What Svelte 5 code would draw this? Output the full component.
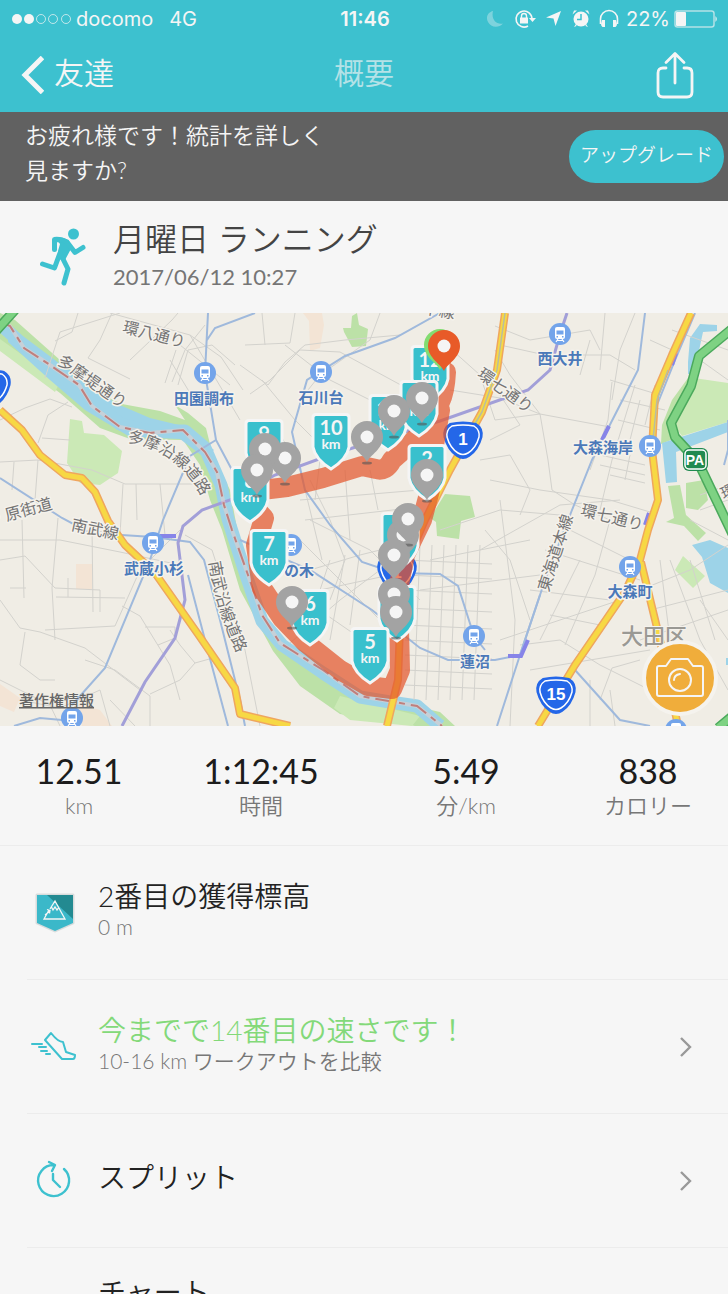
<script>
  const stats = [
    { value: '12.51', label: 'km' },
    { value: '1:12:45', label: '時間' },
    { value: '5:49', label: '分/km' },
    { value: '838', label: 'カロリー' }
  ];

  // x, y are in the map's own units; y starts at 313
  const stations = [
    [205, 373], [321, 372], [560, 334], [650, 446], [153, 543],
    [630, 567], [474, 636], [72, 718], [676, 730], [291, 545]
  ];

  const stationNames = [
    [204, 404, '田園調布'], [321, 403, '石川台'], [560, 364, '西大井'],
    [603, 453, '大森海岸'], [154, 574, '武蔵小杉'], [630, 597, '大森町'],
    [475, 667, '蓮沼'], [299, 576, 'の木']
  ];

  const roadNames = [
    [154, 335, 14, '環八通り'], [92, 382, 35, '多摩堤通り'], [505, 391, 36, '環七通り'],
    [612, 518, 14, '環七通り'], [21, 512, -15, '・原街道'], [95, 530, 12, '南武線'],
    [556, 553, -72, '東海道本線'], [439, 311, 10, '千線'], [729, 492, -25, '環']
  ];

  // kilometre markers: centre, top edge, distance
  const shields = [
    [430, 345, '12'], [388, 394, '11'], [419, 380, '1'], [331, 413, '10'],
    [264, 419, '9'], [250, 466, '8'], [427, 444, '2'], [400, 512, '3'],
    [397, 585, '4'], [370, 627, '5'], [310, 589, '6'], [269, 529, '7']
  ];

  const pins = [
    [367, 437], [394, 411], [422, 398], [285, 458], [265, 449], [257, 470],
    [427, 475], [403, 535], [408, 519], [394, 555], [394, 594], [396, 612], [292, 602]
  ];

  const routeShields = [[463, 440, '1'], [556, 695, '15'], [397, 573, '1'], [-9, 388, '']];

  const minorRoads = [
    'M55 341 L72 332 L78 313', 'M45 378 L60 332 L120 313', 'M88 358 L100 340 L112 313', 'M88 358 L130 379',
    'M110 313 L190 335 L221 357 L243 390', 'M130 360 L150 341 L172 320 L178 313', 'M172 382 L185 350 L205 325',
    'M165 383 L176 350 M178 385 L188 350 L212 345 L235 365 M170 360 L190 393 L220 402 M180 345 L230 385 M190 335 L240 420',
    'M0 420 L25 408 L50 399 L72 407', 'M38 443 L48 415 L68 402 M42 438 L70 440', 'M0 462 L38 460 L92 470 M14 462 L12 490',
    'M92 470 L125 484 L207 484 M123 484 L120 535 L92 530 M136 484 L137 520 M160 484 L165 535 M38 460 L35 500',
    'M0 540 L60 540 L120 552 L180 565 M58 518 L52 588 L55 640 M0 560 L25 556 L55 588 L100 590 M22 520 L24 598 M10 588 L26 588',
    'M0 600 L20 628 L40 632 L85 648 L140 690 M25 632 L20 665 L40 680 L55 680 M45 630 L115 626 L140 570 L180 530',
    'M92 524 L93 612 M100 590 L100 612 M68 578 L68 597 M56 597 L125 598 M122 606 L140 616 L170 665 L180 700 M85 660 L115 670 L150 696 L150 726',
    'M145 627 L175 627 L175 638 L158 645 M195 663 L180 680 L150 694 M195 663 L213 658 M195 663 L180 645 L170 630 M20 700 L60 708 L100 690 L110 726',
    'M0 680 L50 705 L60 726 M110 700 L135 726', 'M185 535 L212 550 L228 600 L245 650 L260 726',
    'M245 345 L290 343 L295 313 M262 313 L265 345 M240 365 L268 385 L285 362 L305 345 L345 340 L400 335',
    'M250 394 L270 380 L300 350 L340 352 L410 390 M285 345 L330 380 L370 400 M262 380 L295 420 L330 455 M300 400 L320 375 L370 340 L380 313',
    'M272 420 L300 470 L310 510 L322 560 M310 480 L330 520 L345 560 L330 600 M300 500 L420 490 M305 520 L410 508 M320 460 L315 500 M345 470 L350 540 M370 470 L378 510',
    'M300 540 L400 640 M310 570 L360 555 L400 545 M320 590 L390 575 M305 600 L370 645 M330 560 L310 620 M345 555 L330 640 M360 550 L350 625',
    'M290 643 L340 600 L380 570 M310 520 L370 550 L420 600 M440 530 L500 510 L560 515 M430 560 L530 540 M420 590 L540 575 M500 500 L515 620 L510 726',
    'M452 350 L480 375 L495 420 L540 414 L610 427 M450 390 L500 398 L540 414 M495 350 L510 375 L540 414 M540 414 L548 460 L552 490 L575 505 L610 520',
    'M495 326 L530 340 L590 330 L600 350 M500 345 L545 355 L610 355 L635 370 M590 340 L580 375 M605 313 L600 370 M635 313 L620 350 L612 400 M610 380 L660 395',
    'M490 440 L520 425 L500 395 M480 460 L510 455 L530 490 L520 515 M490 480 L540 490 L610 500 L650 512 M612 382 L608 420 L590 470',
    'M480 550 L560 505 L620 500 M485 530 L510 560 L530 620 M545 550 L640 580 M560 525 L630 560 M530 590 L610 600 M540 640 L580 560 M565 645 L595 575 L610 520',
    'M520 645 L560 640 L600 665 L650 690 M500 640 L620 600 M550 615 L600 625 M530 670 L620 655 L650 650 M600 700 L612 668 L640 660 M590 680 L590 726 M610 690 L615 726',
    'M640 590 L690 570 L728 545 M650 610 L728 590 M670 560 L700 640 L728 690 M690 560 L715 640 M660 560 L670 640 M640 640 L728 610 M700 600 L728 640',
    'M635 385 L612 460 L600 510 M620 400 L665 410 M618 420 L660 430 M600 455 L645 465 M600 465 L645 475 M610 475 L645 483 M630 455 L625 480 M640 400 L630 440 M655 385 L645 425',
    'M672 330 L728 350 M700 360 L728 380 M700 495 L728 485 M700 510 L728 500 M690 520 L728 540 M650 340 L672 350'
  ];

  const gridRoads = [420, 432, 444, 456, 468, 480];
  const gridRows = [560, 575, 590, 608, 625, 640, 655, 670, 685];

  const highways = [
    'M0 410 L22 430 L40 455 L65 475 L82 478 L95 492 L108 521 L125 545 L155 573 L200 637 L235 688 L240 714 L290 726',
    'M505 313 L497 370 L482 412 L450 470 L425 520 L402 573 L398 680 L387 726',
    'M691 313 L672 355 L655 395 L652 450 L658 500 L648 530 L640 560 L625 592 L575 665 L538 726 M641 562 L660 640 L678 726'
  ];
  const expressway = 'M-5 332 L15 310 M733 328 L699 356 L691 386 L671 423 L675 437 L698 462 L733 535 M740 710 L718 728';
  const border = 'M0 322 L10 326 L24 348 L50 365 L79 385 L92 406 L120 427 L150 433 L183 430 L205 452 L217 472 L224 505 L232 530 L248 575 L262 615 L280 643 L323 670 L360 696 L417 706 L442 726';
</script>

<div class="app">
  <header class="top">
    <div class="status">
      <div class="carrier">
        <svg width="60" height="12" viewBox="0 0 60 12" aria-hidden="true">
          <circle cx="5" cy="6" r="5" fill="#f5f5f5" /><circle cx="17" cy="6" r="5" fill="#f5f5f5" />
          <g fill="none" stroke="#f5f5f5" stroke-opacity=".7"><circle cx="29" cy="6" r="4.5" /><circle cx="41" cy="6" r="4.5" /><circle cx="54" cy="6" r="4.5" /></g>
        </svg>
        <span>docomo</span>
        <span class="net">4G</span>
      </div>
      <strong>11:46</strong>
      <div class="device">
        <svg width="136" height="22" viewBox="0 0 136 22" aria-hidden="true">
          <path d="M7 3 C5 11 10 17 17 15.500 C13 20 5 20 2 14 C-1 8 3 4 7 3Z" fill="#f5f5f5" opacity=".35" />
          <g fill="none" stroke="#f5f5f5" stroke-width="1.600">
            <path d="M46 11 A8 8 0 1 0 42 18" />
            <path d="M35.500 10 V8 a2.500 2.500 0 0 1 5 0 V10" stroke-width="1.400" />
            <path d="M114.500 16 V11 a8.500 8.500 0 0 1 17 0 V16" />
          </g>
          <g fill="#f5f5f5">
            <path d="M34 9.500h8v6h-8z M43 10h7l-3.500 4z" />
            <path d="M75 3 L69.500 18 L67.500 10.500 L60 9.500Z" />
            <circle cx="95" cy="11" r="7.500" />
            <path d="M86.500 6.500 L91 2.500 L88 2.500Z M103.500 6.500 L99 2.500 L102 2.500Z M90 16 l-2 3 2.500-1z M100 16l2 3-2.500-1z M116 12h3v7h-2.500q-1.500-1-1.500-3z M130 12h-3v7h2.500q1.500-1 1.500-3z" />
          </g>
          <path d="M95 6 V11.500 H91" stroke="#3dc1cf" stroke-width="1.500" fill="none" />
        </svg>
        <span>22%</span>
        <svg width="44" height="20" viewBox="0 0 44 20" aria-hidden="true">
          <rect x="1" y="2" width="39" height="16" rx="2.500" fill="none" stroke="#f5f5f5" stroke-opacity=".65" stroke-width="1.500" />
          <rect x="2" y="3" width="10" height="14" rx="1" fill="#f5f5f5" />
          <path d="M41.500 7 q2.500 3 0 6z" fill="#f5f5f5" />
        </svg>
      </div>
    </div>
    <nav>
      <button class="back">
        <svg width="24" height="38" viewBox="0 0 24 38" aria-hidden="true"><path d="M22.500 1.500 L5 19 L22.500 36.500" fill="none" stroke="#f5f5f5" stroke-width="5" /></svg>
        <span>友達</span>
      </button>
      <h1>概要</h1>
      <button class="share" aria-label="共有">
        <svg width="38" height="48" viewBox="0 0 38 48" fill="none" stroke="#f5f5f5" stroke-width="2.800" stroke-linecap="round" stroke-linejoin="round" aria-hidden="true">
          <path d="M10 17 H7 q-5 0-5 5 V41 q0 5 5 5 H31 q5 0 5-5 V22 q0-5-5-5 H28 M19 32 V3 M10 11.500 L19 2.500 L28 11.500" />
        </svg>
      </button>
    </nav>
  </header>

  <section class="banner">
    <p>お疲れ様です！統計を詳しく見ますか?</p>
    <button>アップグレード</button>
  </section>

  <section class="workout">
    <svg width="48" height="60" viewBox="0 0 48 60" aria-hidden="true">
      <circle cx="33.500" cy="7" r="5.500" fill="#3dc1cf" />
      <path d="M14 10 Q22 9 29 14 L32 20 L25 33 L18 32 L18 24 L20 17Z" fill="#3dc1cf" />
      <path d="M14.500 22.500 V12.500 Q22 12 27 15 L35 25.500 L43 20.500 M20 26 L14.500 41 L2.500 37 M22 30 L28 42 L24 56" fill="none" stroke="#3dc1cf" stroke-width="5" stroke-linecap="round" stroke-linejoin="round" />
    </svg>
    <div>
      <h2>月曜日 ランニング</h2>
      <time datetime="2017-06-12T10:27">2017/06/12 10:27</time>
    </div>
  </section>

  <section class="map">
    <svg class="canvas" viewBox="0 313 728 413" role="img" aria-label="地図">
      <defs>
        <g id="train">
          <circle r="11" fill="#73a4ea" />
          <rect x="-5" y="-7" width="10" height="12" rx="2" fill="#fff" />
          <path d="M-3.500-3.500h7v4h-7z M-3.500 2h1.500v1.500h-1.500z M2 2h1.500v1.500h-1.500z" fill="#73a4ea" />
          <path d="M-2 5 L-4 8 M2 5 L4 8 M-3 6.500H3" stroke="#fff" stroke-width="1.200" />
        </g>
        <path id="badge" d="M-15 1.500 H15 Q18 1.500 18 4.500 V34 Q16 46 0 56 Q-16 46 -18 34 V4.500 Q-18 1.500 -15 1.500Z" />
        <path id="pin" d="M0 25 C-3 18-16 12-16 0 A16 16 0 0 1 16 0 C16 12 3 18 0 25Z" />
        <path id="national" d="M-13-16 Q0-19 13-16 Q20-12 18.500-3 Q15 10 6 16 Q0 20-6 16 Q-15 10-18.500-3 Q-20-12-13-16Z" />
        <path id="riverside" d="M127 442 Q178 450 202 497" />
        <path id="southbank" d="M209 562 Q216 610 238 655" />
      </defs>

      <rect y="313" width="728" height="413" fill="#f0ede5" />
      <g fill="#f3e4d5">
        <path d="M303 313h19l2 12-4 23-10 3-1-30z M76 564h16v25h-16z M0 684l20 14-6 14-14-6z M78 704l22 6 12 16h-30z" />
      </g>
      <g fill="#bce1a7">
        <path d="M0 313 L15 320 L60 360 L92 390 L122 404 L160 411 L185 420 L175 405 L188 413 L206 428 L212 452 L230 490 L240 545 L262 620 L300 655 L360 694 L440 712 L455 726 L415 726 L340 714 L300 686 L273 651 L240 590 L222 530 L210 500 L200 465 L183 440 L130 439 L100 428 L60 393 L0 350Z" />
        <path d="M352 316l5-3 2 12 9 4-2 17-14 1-8-15-1-4h8z M445 494l25 2 5 21-14 4-2 18-22-3-1-14-6-4z M668 486l12-1 6 30 20 18-8 8-14-15-18-4 8-4z M686 483l18-3 4 20-10 10-12-2z M688 378 L697 378 L692 395 L671 423 L676 438 L661 444 L662 425 L672 400Z" />
      </g>
      <g fill="#cbe9b6">
        <path d="M0 339 L60 382 L55 392 L0 351Z M70 419l12 2 2 12 20 2 18 16-4 22-18 12-20-2-13-20z M694 378 L728 383 V422 L682 436 L673 424 L691 390Z M675 570l8-14 22 20-12 12z M340 696 L420 716 L412 726 L350 720 L334 708Z" />
      </g>
      <g fill="#9dd3e8">
        <path d="M8 324 L30 345 L85 380 L115 403 L150 418 L183 426 L214 450 L205 458 L180 439 L130 437 L85 410 L50 380 L8 342Z M690 338l10-14 17 1v6l-14 1-9 42h-6v-12z M662 443 L728 422 V432 L676 452 L677 482 L666 483Z M692 545l18-5 18 8v45l-18-10-8-26z M726 658h2v7h-2z" />
      </g>
      <path d="M0 324 L20 342 L52 366 L85 396 L120 424 L150 431 L185 431 L205 448 L221 485 L228 519 L246 575 L262 621 L282 645 L323 673 L360 697 L390 702 L417 706 L440 726" fill="none" stroke="#9dd3e8" stroke-width="13" stroke-linejoin="round" />

      <g fill="none" stroke="#d3d2cd" stroke-width="1">
        {#each minorRoads as d}<path {d} />{/each}
        {#each gridRoads as x}<path d="M{x} 545 L{x - 6} 700" />{/each}
        {#each gridRows as y}<path d="M405 {y} L492 {y + 4}" />{/each}
      </g>

      <g fill="none" stroke="#9fb9dc" stroke-width="2">
        <path d="M208 313 L205 373 L216 440 L232 470 L245 490 M255 313 L215 328 L207 340" />
        <path d="M440 313 L395 338 L345 356 L307 380 L292 432 L305 490 L330 525 L362 562 L395 573 L440 574 L458 586 L474 636 L485 650" />
        <path d="M0 478 L62 518 L90 533 L153 537 L190 542 L204 560 L220 620 L240 700 L245 726" />
        <path d="M216 440 L190 456 L163 520 L150 560 L105 668 L72 705 M14 726 L40 718 L62 720 M188 575 L205 640 L228 726" />
        <path d="M240 540 L310 570 L372 610 L420 648 L448 660 L495 660 L520 655 L545 580 L572 510 L592 460 L620 405 L638 370 L645 313" />
        <path d="M540 595 L520 655 L497 726 M575 670 L620 720 L650 726 M695 313 L675 360 L655 410 M728 420 V450 L724 465" />
      </g>
      <path d="M567 313 L560 334 L550 370 L528 390 L440 421 L330 455 L275 475 L230 500 L202 510 L183 526 L178 543 L185 600 L175 638 L145 682 L122 726" fill="none" stroke="#a29fd8" stroke-width="3" />
      <path d="M160 536h16 M508 656h13l7-16 M602 440l7-14 M672 365l4-12 M645 525l4-12" fill="none" stroke="#8784e8" stroke-width="4" />
      <path d={border} fill="none" stroke="#f0cdc8" stroke-width="4" opacity=".5" />
      <path d={border} fill="none" stroke="#c07f7c" stroke-width="2" stroke-dasharray="18 6 6 6" />

      <g fill="none" stroke-linejoin="round">
        {#each highways as d}<path {d} stroke="#efa65e" stroke-width="8" />{/each}
        {#each highways as d}<path {d} stroke="#f7d844" stroke-width="5" />{/each}
        <path d="M505 313 L497 370 L482 412 L470 432 M668 370 L657 400 L653 440" stroke="#b9bda0" stroke-width="1.500" />
        <path d={expressway} stroke="#4ba95c" stroke-width="10" />
        <path d={expressway} stroke="#7ed283" stroke-width="7" />
      </g>

      {#each stations as [x, y]}<use href="#train" {x} {y} />{/each}
      <g class="place">
        {#each stationNames as [x, y, name]}<text {x} {y}>{name}</text>{/each}
      </g>
      <g class="road">
        {#each roadNames as [x, y, turn, name]}
          <text transform="translate({x} {y}) rotate({turn})" dy="5">{name}</text>
        {/each}
        <text class="along"><textPath href="#riverside">多摩沿線道路</textPath></text>
        <text class="along"><textPath href="#southbank">南武沿線道路</textPath></text>
      </g>
      <text class="ward" x="654" y="644">大田区</text>
      <text class="legal" x="19" y="706">著作権情報</text>

      {#each routeShields as [x, y, number]}
        <g transform="translate({x} {y})">
          <use href="#national" fill="#2467e8" stroke="#2467e8" stroke-width="2" />
          <path d="M-11-14 Q0-16 11-14 Q17-10 16-3 Q13 8 5 13 Q0 16-5 13 Q-13 8-16-3 Q-17-10-11-14Z" fill="none" stroke="#fff" stroke-width="1.500" />
          <text class="number" y="5">{number}</text>
        </g>
      {/each}
      <rect x="683" y="448" width="25" height="23" rx="6" fill="#218a50" />
      <rect x="685" y="450" width="21" height="19" rx="4" fill="none" stroke="#fff" stroke-width="1.500" />
      <text class="pa" x="695" y="465">PA</text>

      <path d="M446 372 Q445 392 440 402 L432 422 L408 446 L392 460 Q386 472 376 469 L362 466 L323 478 L287 487 L262 490 L252 505 L264 518 L256 545 L262 588 L282 618 L306 643 L340 670 L368 686 L392 689 L400 670 L398 590 L405 555 L422 520 L430 490 L434 445 L440 410" fill="none" stroke="#e3572e" stroke-opacity=".72" stroke-width="20" stroke-linejoin="round" stroke-linecap="round" />

      {#each shields as [x, y, km]}
        <g transform="translate({x} {y})">
          <use href="#badge" fill="#39c0cd" stroke="#f5f5f5" stroke-width="3" />
          <text class="km-number" y="22">{km}</text>
          <text class="km-unit" y="36">km</text>
        </g>
      {/each}
      {#each pins as [x, y]}
        <g transform="translate({x} {y})">
          <ellipse cy="26" rx="5" ry="1.500" fill="#555" opacity=".6" />
          <use href="#pin" fill="#a3a3a3" />
          <circle r="6.500" fill="#f5f5f5" />
        </g>
      {/each}
      <use href="#pin" x="440" y="345" fill="#83dc70" />
      <use href="#pin" x="444" y="346" fill="#e85a28" />
      <circle cx="444" cy="346" r="6.500" fill="#f5f5f5" />
    </svg>
    <button class="camera" aria-label="写真を追加">
      <svg width="50" height="42" viewBox="0 0 50 42" fill="none" stroke="#f5f5f5" stroke-width="2" stroke-linejoin="round" stroke-linecap="round" aria-hidden="true">
        <path d="M4 39 Q2 39 2 37 V11 Q2 9 4 9 H11 L16 2 H33 L38 9 H46 Q48 9 48 11 V37 Q48 39 46 39Z" />
        <circle cx="25" cy="23" r="11" /><path d="M19 23 Q19 18 25 17" />
      </svg>
    </button>
  </section>

  <dl class="stats">
    {#each stats as { value, label }}
      <div><dt>{label}</dt><dd>{value}</dd></div>
    {/each}
  </dl>

  <ul class="rows">
    <li>
      <div class="row">
        <svg width="56" height="44" viewBox="0 0 56 44" aria-hidden="true">
          <path d="M10 4 H46 V32 L28 40 L10 32Z" fill="#3bb8c9" stroke="#d8dcdc" stroke-width="3" stroke-linejoin="round" />
          <path d="M10 4 H46 V32 L28 40 L10 32Z" fill="#3bb8c9" /><path d="M20 4 H46 V28Z" fill="#238a91" />
          <path d="M22 19 L17 28 H38 L28 10 L23 18 M24.500 16 l1.500 3 2-3 2 3 2-3 M18 24 l5-4 M20 18.500 l3 1 -.5 3" fill="none" stroke="#f5f5f5" stroke-width="1.300" />
        </svg>
        <div class="text"><h3>2番目の獲得標高</h3><p>0 m</p></div>
      </div>
    </li>
    <li>
      <a class="row" href="#compare">
        <svg width="56" height="44" viewBox="0 0 56 44" fill="none" stroke="#3dc1cf" stroke-width="2" stroke-linecap="round" stroke-linejoin="round" aria-hidden="true">
          <path d="M24 8 L18 15 L35 34 H46 Q48 34 48 30 L39 27 L36 17 Q31 17 24 8Z M5 19 H15 M12 22 H19 M14 26 H20 M19 29 H23" />
        </svg>
        <div class="text"><h3 class="best">今までで14番目の速さです！</h3><p>10-16 km ワークアウトを比較</p></div>
        <svg width="14" height="22" viewBox="0 0 14 22" aria-hidden="true"><path d="M2 2 L11 11 L2 20" fill="none" stroke="#999" stroke-width="2.400" /></svg>
      </a>
    </li>
    <li>
      <a class="row" href="#splits">
        <svg width="56" height="44" viewBox="0 0 56 44" fill="none" stroke="#3dc1cf" stroke-width="2.400" stroke-linecap="round" stroke-linejoin="round" aria-hidden="true">
          <path d="M37 10 A15.500 15.500 0 1 1 27 6 M22 3 L28 6 L25 12 M26 15 V21 L33 28" />
        </svg>
        <div class="text"><h3>スプリット</h3></div>
        <svg width="14" height="22" viewBox="0 0 14 22" aria-hidden="true"><path d="M2 2 L11 11 L2 20" fill="none" stroke="#999" stroke-width="2.400" /></svg>
      </a>
    </li>
    <li>
      <a class="row chart" href="#chart"><div class="text"><h3>チャート</h3></div></a>
    </li>
  </ul>
</div>

<style>
  :global(body) { margin: 0; background: #f6f6f6; }
  * { box-sizing: border-box; }
  .app {
    display: flex;
    flex-direction: column;
    height: 100vh;
    overflow: hidden;
    font-family: Lato, "Noto Sans CJK JP", sans-serif;
    font-weight: 350;
    color: #222;
  }
  h1, h2, h3, p, dl, dd, ul { margin: 0; padding: 0; font-weight: inherit; }
  button { border: 0; padding: 0; background: none; font: inherit; color: inherit; cursor: pointer; }
  svg { display: block; flex: none; }

  .top { flex: none; background: #3dc1cf; color: #f5f5f5; }
  .status {
    display: grid;
    grid-template-columns: 1fr auto 1fr;
    align-items: center;
    height: 37px;
    padding: 0 10px 0 12px;
    font-family: Inter, sans-serif;
    font-size: 20px;
    font-weight: 400;
  }
  .status strong { font-weight: 600; }
  .carrier, .device { display: flex; align-items: center; gap: 4px; }
  .net { margin-left: 12px; }
  .device { justify-content: flex-end; }
  nav {
    display: grid;
    grid-template-columns: 1fr auto 1fr;
    align-items: center;
    height: 75px;
    padding: 0 20px;
    font-size: 30px;
  }
  .back { display: flex; align-items: center; gap: 10px; }
  .back span, nav h1 { padding-bottom: 6px; line-height: 40px; }
  nav h1 { font-size: 30px; opacity: .65; }
  .share { justify-self: end; margin-right: 14px; }

  .banner {
    flex: none;
    display: flex;
    align-items: center;
    justify-content: space-between;
    gap: 24px;
    height: 89px;
    padding: 0 4px 0 25px;
    background: #616161;
    color: #f5f5f5;
  }
  .banner p { max-width: 304px; padding-bottom: 8px; font-size: 23px; line-height: 35px; }
  .banner button { flex: none; height: 53px; padding: 0 11px 6px; border-radius: 27px; background: #3dc1cf; font-size: 19px; }

  .workout { flex: none; display: flex; align-items: center; gap: 25px; height: 112px; padding-left: 40px; }
  .workout h2 { font-size: 32px; line-height: 40px; color: #444; }
  .workout time { display: block; font-size: 22px; line-height: 36px; font-weight: 400; color: #757575; }

  .map { flex: none; position: relative; }
  .canvas { width: 100%; height: auto; }
  .canvas text { text-anchor: middle; }
  .place text { font-size: 15px; font-weight: 700; fill: #4b79b9; }
  .place text, .road text { paint-order: stroke; stroke: #f5f2ec; stroke-width: 3px; stroke-linejoin: round; }
  .road text { font-size: 16px; font-weight: 400; fill: #747474; }
  .canvas .along { text-anchor: start; }
  .ward { font-size: 22px; font-weight: 500; fill: #9a9994; paint-order: stroke; stroke: #f5f2ec; stroke-width: 2px; }
  .canvas .legal { text-anchor: start; font-size: 15px; font-weight: 500; fill: #666; text-decoration: underline; }
  .number { font: 700 17px "Liberation Sans", sans-serif; fill: #fff; }
  .pa { font: 700 14px "Liberation Sans", sans-serif; fill: #fff; }
  .km-number { font-size: 20px; font-weight: 700; fill: #f5f5f5; }
  .km-unit { font-size: 14px; font-weight: 700; fill: #f5f5f5; }
  .camera {
    position: absolute;
    right: 10px;
    bottom: 10px;
    display: grid;
    place-items: center;
    width: 76px;
    height: 76px;
    border: 4px solid #f5f3ee;
    border-radius: 50%;
    background: #f0ad3b;
  }

  .stats {
    flex: none;
    display: grid;
    grid-template-columns: 158fr 206fr 204fr 160fr;
    align-items: center;
    height: 120px;
    padding-top: 2px;
    text-align: center;
    border-bottom: 1px solid #ececec;
  }
  .stats div { display: flex; flex-direction: column-reverse; }
  .stats dd { font-size: 34px; line-height: 38px; font-weight: 400; color: #1c1c1c; }
  .stats dt { font-size: 22px; line-height: 32px; color: #777; }

  .rows { flex: 1; min-height: 0; overflow-y: auto; scrollbar-width: none; list-style: none; }
  li { margin-left: 27px; border-bottom: 1px solid #ececec; }
  .row { display: flex; align-items: center; gap: 15px; height: 133px; padding-right: 35px; color: inherit; text-decoration: none; }
  .text { flex: 1; padding-bottom: 8px; }
  .text h3 { font-size: 28px; line-height: 36px; }
  .text p { font-size: 21px; line-height: 26px; color: #777; }
  .text .best { color: #83d979; }
  .chart { height: 96px; padding-left: 71px; }
</style>
